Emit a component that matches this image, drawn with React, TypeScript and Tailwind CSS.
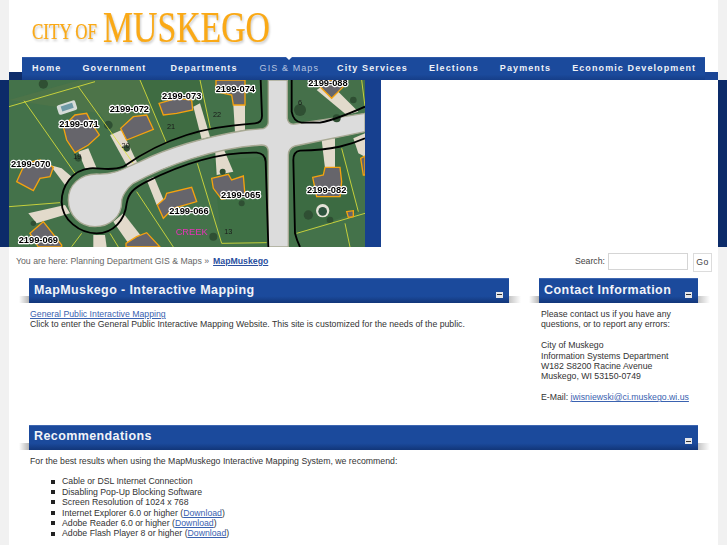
const NAV = [
  { label: "Home", cls: "" },
  { label: "Government", cls: "" },
  { label: "Departments", cls: "ml-[3px]" },
  { label: "GIS & Maps", active: true, cls: "ml-[1px]" },
  { label: "City Services", cls: "-ml-[3px]" },
  { label: "Elections", cls: "" },
  { label: "Payments", cls: "" },
  { label: "Economic Development", cls: "" },
];

const YELLOW = [
  "M27 80L285 5", "M72 62L225 280", "M235 20L400 250", "M420 0L500 190", "M600 0L632 150",
  "M27 380L180 368", "M410 335L520 501", "M592 250L665 490", "M665 490L800 488", "M1025 205L1075 395",
  "M890 460L1095 400", "M1035 430L1050 501", "M215 500L245 460", "M330 460L355 501", "M1085 0L1095 80",
];
const DRIVES = [
  "M700 75L735 75L735 150L705 155Z", "M580 80L600 70L630 170L605 178Z", "M330 165L365 150L415 255L385 265Z",
  "M235 215L265 205L290 265L255 265Z", "M150 255L185 265L215 290L195 315Z", "M85 400L195 375L210 400L110 430Z",
  "M440 300L462 290L495 370L470 375Z", "M645 205L670 205L700 275L650 285Z", "M340 425L370 400L425 470L385 490Z",
  "M280 465L315 465L320 501L280 501Z", "M965 180L1005 175L1005 265L975 265Z", "M950 30L985 5L1075 95L1040 105Z",
  "M1060 175L1095 160L1095 230L1075 220Z",
];
const HOUSES = [
  "M648 0L648 35L695 45L700 75L735 75L735 0Z", "M477 70L490 105L530 100L578 90L575 60L530 55Z",
  "M362 145L380 180L460 148L440 105L400 110Z", "M190 140L215 115L225 105L260 100L275 130L298 165L265 195L225 218L200 180Z",
  "M50 305L75 250L120 240L160 262L150 290L120 295L100 332Z", "M90 460L130 425L185 495L185 501L115 501Z",
  "M472 375L495 355L500 340L575 322L590 365L520 385L490 415Z", "M635 295L685 283L695 300L730 288L735 345L665 358L640 325Z",
  "M938 292L970 285L975 262L1020 262L1025 305L1020 350L950 350Z", "M960 20L995 55L1030 20L1000 0L960 0Z",
  "M378 490L410 470L440 458L480 501L378 501Z", "M1040 395L1060 392L1060 410L1045 412Z", "M1095 228L1082 235L1090 285L1095 285Z",
];
const LABELS = [
  ["2199-073", 545, 47], ["2199-074", 706, 28], ["2199-088", 984, 10], ["2199-072", 388, 88], ["2199-071", 237, 133],
  ["2199-070", 92, 252], ["2199-065", 722, 346], ["2199-066", 567, 393], ["2199-082", 980, 329], ["2199-069", 115, 479],
] as const;
const LOTS = [["22", 651, 110], ["21", 513, 146], ["6", 900, 76], ["13", 685, 463], ["20", 377, 203], ["19", 232, 238]] as const;
const TREES = [
  [130, 12, 14], [325, 135, 13], [235, 235, 10], [380, 205, 10], [900, 90, 18], [1010, 115, 12], [925, 405, 14], [990, 420, 10],
  [725, 370, 9], [100, 430, 8], [668, 275, 9], [1060, 60, 10], [640, 470, 12],
] as const;
const ROAD =
  "M290 282C350 285 380 260 420 245C500 205 620 170 740 150L790 146Q805 140 805 125L805 0L862 0L862 115Q865 135 885 132L1095 100L1095 155L885 198Q865 205 865 225L865 501L805 501L805 215Q805 195 785 195C640 205 500 255 400 310C380 325 365 350 365 365C365 410 330 440 285 440C240 440 205 405 205 360C205 315 240 282 290 282Z";

function MapImage() {
  return (
    <svg viewBox="27 0 1068 501" width={356} height={167} className="block shrink-0 blur-[0.4px]">
      <rect x="27" y="0" width="1068" height="501" fill="#44724a" />
      <path d="M27 60L240 0H420L500 190L400 250L300 100Z" fill="#4d7449" />
      <path d="M640 240L800 230L800 490L665 490Z" fill="#3f7045" />
      <path d="M880 220L1025 205L1075 395L890 460Z" fill="#3c6b42" />
      <path d="M880 0H1095V70L960 120L890 110Z" fill="#45704a" />
      <path d="M420 0H600L632 150L500 190Z" fill="#3f6c42" />
      {DRIVES.map((d) => <path key={d} d={d} fill="#e2dacb" />)}
      <path d={ROAD} fill="#dcdcdc" stroke="#a8a994" strokeWidth="4" />
      <g fill="#2f4f33">
        {TREES.map(([x, y, r]) => <circle key={`${x}-${y}`} cx={x} cy={y} r={r} />)}
      </g>
      <g fill="none" stroke="#dfe23a" strokeWidth="2.5">
        {YELLOW.map((d) => <path key={d} d={d} />)}
      </g>
      <rect x="172" y="68" width="58" height="30" rx="6" fill="#d6dcd8" transform="rotate(-18 200 83)" />
      <rect x="184" y="74" width="36" height="16" fill="#6e9aa6" transform="rotate(-18 200 83)" />
      <circle cx="968" cy="392" r="20" fill="#e5e3d8" />
      <circle cx="968" cy="394" r="13" fill="#2f5440" />
      <g fill="#66656b" stroke="#f5a20f" strokeWidth="4" strokeLinejoin="miter">
        {HOUSES.map((d) => <path key={d} d={d} />)}
      </g>
      <g fill="none" stroke="#000" strokeWidth="5.5" strokeLinejoin="round">
        <path d="M782 0L786 108Q786 128 765 130C700 135 620 145 560 165C480 190 420 225 370 260C330 275 300 262 270 265C215 270 185 320 185 365C185 420 240 460 290 460C340 460 375 420 380 370C385 340 400 325 440 305C520 265 640 215 770 218Q795 220 797 245L805 501" />
        <path d="M875 0L875 95Q880 125 905 128L960 128C1000 120 1050 100 1095 80" />
        <path d="M1095 175C1050 195 1000 210 900 212Q880 215 880 240L885 460Q890 480 900 501" />
      </g>
      <g fontFamily="'Liberation Sans', sans-serif" fontSize="22" fill="#1a1a1a">
        {LOTS.map(([t, x, y]) => <text key={t} x={x} y={y} textAnchor="middle">{t}</text>)}
      </g>
      <g fontFamily="'Liberation Sans', sans-serif" fontWeight="700" fontSize="28" fill="#000" stroke="#fff" strokeWidth="7" strokeLinejoin="round" style={{ paintOrder: "stroke" }}>
        {LABELS.map(([t, x, y]) => <text key={t} x={x} y={y + 9} textAnchor="middle" textLength={118} lengthAdjust="spacingAndGlyphs">{t}</text>)}
      </g>
      <text x="575" y="466" textAnchor="middle" fontFamily="'Liberation Sans', sans-serif" fontSize="27" fill="#e832b8" textLength={96} lengthAdjust="spacingAndGlyphs">CREEK</text>
    </svg>
  );
}

function Logo() {
  return (
    <svg width={250} height={50} viewBox="0 0 250 50" className="block blur-[0.3px] drop-shadow-[1px_2px_1px_rgba(0,0,0,0.2)]" style={{ fontFamily: "'Liberation Serif', serif" }}>
      <g fill="#faa916" stroke="#faa916" strokeWidth="0.2">
        <text x="0" y="38.5" fontSize="23.5" textLength={65} lengthAdjust="spacingAndGlyphs">CITY OF</text>
        <text x="71" y="42" fontSize="44.5" textLength={167} lengthAdjust="spacingAndGlyphs">MUSKEGO</text>
      </g>
    </svg>
  );
}

function Collapse() {
  return (
    <span className="flex h-[6px] w-[7px] shrink-0 items-center justify-center bg-[#e4e6ea]">
      <span className="h-px w-[5px] bg-[#333]" />
    </span>
  );
}

function SectionHeader({ title, className }: { title: string; className: string }) {
  return (
    <div className="relative flex h-[25px] items-center justify-between border-t border-[#3d66b0] bg-[linear-gradient(to_bottom,#1b4a9c_0%,#1b4a9c_72%,#123679_100%)] pl-[5px] pr-[6px]">
      <span className="absolute bottom-0 left-[-10px] h-[7px] w-[10px] bg-[linear-gradient(to_right,#ffffff,#b5b5b5)]" />
      <span className="absolute bottom-0 right-[-12px] h-[7px] w-[12px] bg-[linear-gradient(to_left,#ffffff,#c4c4c4)]" />
      <span className={`mb-[2px] whitespace-nowrap text-[12.5px] font-bold leading-none text-[#f2f4f9] ${className}`}>{title}</span>
      <span className="mt-[7px]"><Collapse /></span>
    </div>
  );
}

export default function App() {
  return (
    <div className="h-[545px] w-[727px] overflow-hidden bg-[#f1f1f1] px-[9px] font-['Liberation_Sans',Arial,sans-serif] text-[8.73px] leading-[10.4px] text-[#333]">
      <div className="h-full bg-white">
        <div className="h-[57px] pl-[23px]">
          <Logo />
        </div>

        <div className="relative pl-[13px] pr-[13px]">
          <div className="absolute bottom-0 left-0 h-2 w-[13px] bg-[#0e2d6b]" />
          <div className="absolute bottom-0 right-0 h-2 w-[13px] bg-[#1a4595]" />
          <nav className="relative flex h-[23px] items-center gap-[21px] border-t border-[#2f5aa8] bg-[linear-gradient(to_bottom,#1b4a9c_0%,#1b4a9c_75%,#163e88_100%)] pb-px pl-[10px]">
            {NAV.map((n) => (
              <span key={n.label} className={`relative whitespace-nowrap text-[9px] leading-none tracking-[1.1px] ${n.cls} ${n.active ? "font-normal text-[#b7c5e0]" : "font-bold text-[#eef1f7]"}`}>
                {n.label}
                {n.active && <span className="absolute left-1/2 top-[-7px] h-0 w-0 -translate-x-1/2 border-x-[3px] border-t-[3px] border-x-transparent border-t-white" />}
              </span>
            ))}
          </nav>
        </div>

        <div className="-mx-[9px] flex h-[167px] bg-[#0c2b69] px-[9px]">
          <div className="flex w-full bg-white">
            <MapImage />
            <div className="h-full w-4 bg-[#17408f]" />
          </div>
        </div>

        <div className="flex h-[31px] items-start justify-between pl-[7px] pr-[6px] pt-[6px]">
          <div className="flex items-center gap-[4px] pt-[3px] text-[#666]">
            <span>You are here: Planning Department GIS &amp; Maps »</span>
            <a className="font-bold text-[#2a4f9e] underline">MapMuskego</a>
          </div>
          <div className="flex items-start">
            <span className="pt-[3px] text-[#444]">Search:</span>
            <div className="ml-[3px] h-[17px] w-[80px] border border-[#d5d5d5] bg-white" />
            <div className="ml-[5px] flex h-[19px] w-[19px] items-center justify-center border border-[#dcdcdc] bg-white tracking-[0.5px] text-[#444]">Go</div>
          </div>
        </div>

        <div className="flex items-start pl-[20px]">
          <div className="w-[480px]">
            <SectionHeader title="MapMuskego - Interactive Mapping" className="tracking-[0.4px]" />
            <div className="pl-[1px] pt-[6px]">
              <a className="block text-[#3a62b0] underline">General Public Interactive Mapping</a>
              <p>Click to enter the General Public Interactive Mapping Website. This site is customized for the needs of the public.</p>
            </div>
          </div>
          <div className="ml-[30px] w-[159px]">
            <SectionHeader title="Contact Information" className="tracking-[0.45px]" />
            <div className="pl-[2px] pt-[6px]">
              <p>Please contact us if you have any<br />questions, or to report any errors:</p>
              <p className="mt-[10.4px]">City of Muskego<br />Information Systems Department<br />W182 S8200 Racine Avenue<br />Muskego, WI 53150-0749</p>
              <p className="mt-[10.4px] whitespace-nowrap">E-Mail: <a className="text-[#3a62b0] underline">jwisniewski@ci.muskego.wi.us</a></p>
            </div>
          </div>
        </div>

        <div className="ml-[20px] mt-[22px] w-[669px]">
          <SectionHeader title="Recommendations" className="tracking-[0.4px]" />
          <div className="pl-[1px] pt-[6px]">
            <p>For the best results when using the MapMuskego Interactive Mapping System, we recommend:</p>
            <ul className="mt-[10.4px]">
              {[
                ["Cable or DSL Internet Connection"],
                ["Disabling Pop-Up Blocking Software"],
                ["Screen Resolution of 1024 x 768"],
                ["Internet Explorer 6.0 or higher ", "Download"],
                ["Adobe Reader 6.0 or higher ", "Download"],
                ["Adobe Flash Player 8 or higher ", "Download"],
              ].map(([t, d]) => (
                <li key={t} className="flex items-center pl-[21px]">
                  <span className="mr-[7px] h-[4px] w-[4px] bg-[#222]" />
                  <span>{t}{d && <>(<a className="text-[#3a62b0] underline">{d}</a>)</>}</span>
                </li>
              ))}
            </ul>
          </div>
        </div>
      </div>
    </div>
  );
}
